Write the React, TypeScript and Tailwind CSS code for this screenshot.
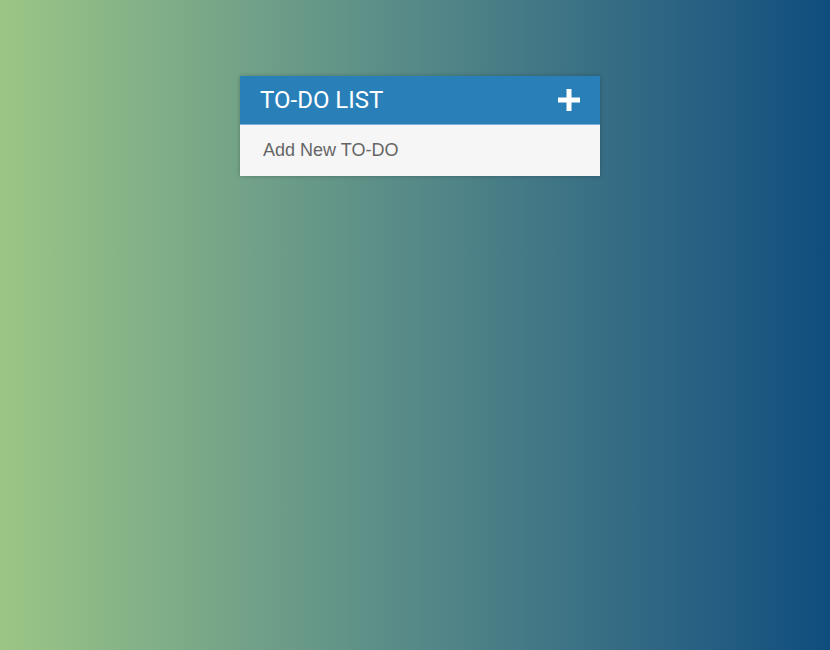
import React from "react";

const App: React.FC = () => {
  return (
    <div className="min-h-[650px] w-full bg-gradient-to-r from-[#9cc685] to-[#0f4d7e] pt-[76px]">
      <div className="ml-[240px] w-[360px] shadow-[0_0_4px_rgba(0,0,0,0.25)]">
        {/* Header */}
        <div className="flex h-[48px] items-center justify-between bg-[#2980b9] pl-[20px] pr-[20px]">
          <h1 className="font-['Roboto',sans-serif] text-[24px] font-normal text-white">
            TO-DO LIST
          </h1>
          <button type="button" className="flex h-[22px] w-[22px] items-center justify-center">
            <svg width="22" height="22" viewBox="0 0 22 22">
              <rect x="8.5" y="0" width="5" height="22" fill="#fff" />
              <rect x="0" y="8.5" width="22" height="5" fill="#fff" />
            </svg>
          </button>
        </div>

        {/* New to-do input */}
        <input
          type="text"
          placeholder="Add New TO-DO"
          className="block h-[52px] w-full border-t border-t-[#7fb1d6] bg-[#f6f6f6] px-[23px] font-['Liberation_Sans',Arial,sans-serif] text-[18px] text-[#555] outline-none placeholder:text-[#666]"
        />
      </div>
    </div>
  );
};

export default App;
